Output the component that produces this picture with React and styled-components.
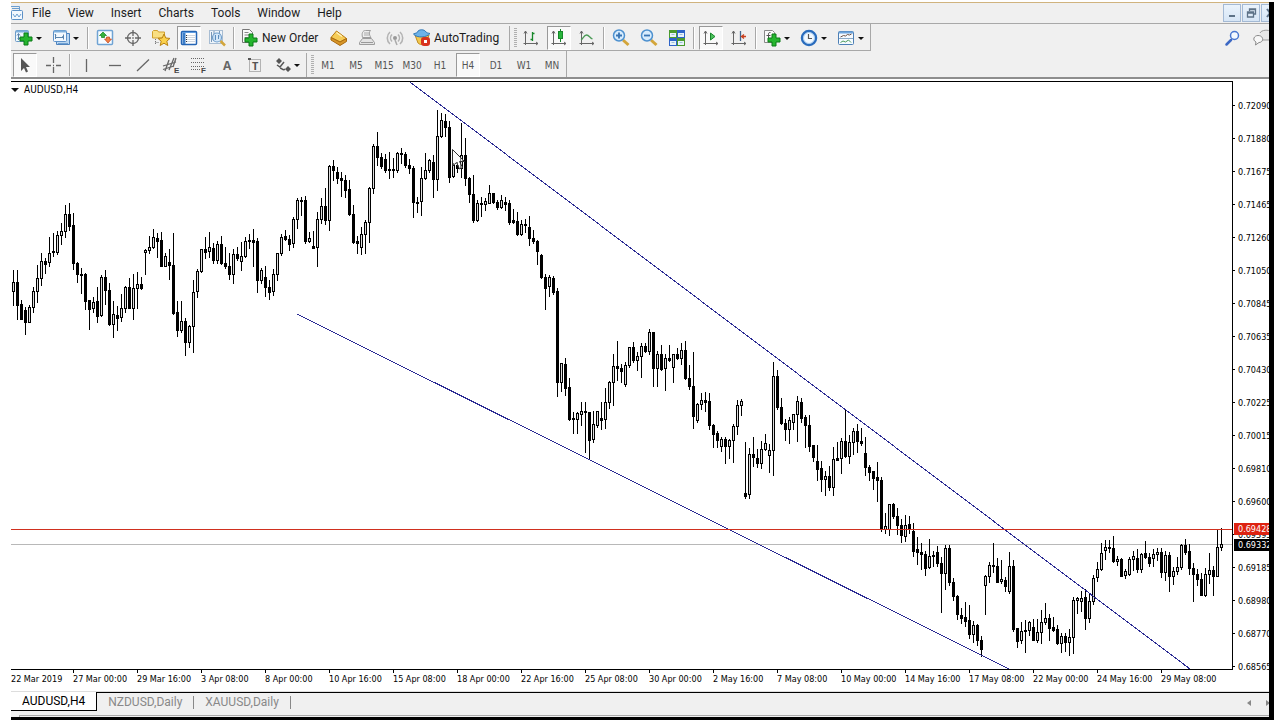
import React from 'react';
import styled, { createGlobalStyle } from 'styled-components';

const GlobalStyle = createGlobalStyle`
  body {
    margin: 0;
    background: #fff;
    font-family: Roboto, "Open Sans", sans-serif;
    font-size: 12px;
    color: #1c1c1c;
  }
  button {
    font: inherit;
    color: inherit;
    background: none;
    border: 0;
    padding: 0;
    margin: 0;
  }
`;

const Page = styled.div`
  box-sizing: border-box;
  height: 100vh;
  padding: 2px 6px 0 11px;
  display: flex;
`;

const Terminal = styled.main`
  flex: 1;
  min-width: 0;
  display: flex;
  flex-direction: column;
  overflow: hidden;
  background: #fff;
  border-right: 5px solid #000;
  border-bottom: 3px solid #000;
`;

const MenuBar = styled.header`
  box-sizing: border-box;
  height: 22px;
  display: flex;
  align-items: center;
  justify-content: space-between;
  background: #f0f0f0;
  border-top: 1px solid #d0b37e;
  border-bottom: 1px solid #a8a8a8;
`;

const Menu = styled.nav`
  display: flex;
  align-items: center;
`;

const MenuItem = styled.button`
  padding: 0 8px;
  margin-right: 1px;
  line-height: 18px;
`;

const MenuLogo = styled.svg`
  width: 13px;
  height: 16px;
`;

const WindowButtons = styled.div`
  display: flex;
  gap: 1px;
  width: 46px;
  overflow: hidden;
`;

const WindowButton = styled.button`
  box-sizing: border-box;
  flex: none;
  width: 18px;
  height: 18px;
  display: flex;
  border: 1px solid #a3b9d4;
  background: linear-gradient(#eaf3fc, #d6e5f5);
`;

const Toolbars = styled.section`
  display: flex;
  justify-content: space-between;
  background: #f0f0f0;
  border-bottom: 2px solid #8e8e8e;
`;

const ToolbarRow = styled.div`
  box-sizing: border-box;
  width: max-content;
  height: ${(p) => (p.$framed ? 27 : 26)}px;
  padding-top: 2px;
  display: flex;
  align-items: center;
  border-right: 1px solid #a8a8a8;
  border-bottom: ${(p) => (p.$framed ? '1px solid #a8a8a8' : 0)};
`;

const ToolButton = styled.button`
  box-sizing: border-box;
  width: 28px;
  height: 24px;
  display: flex;
  align-items: center;
  justify-content: center;
  color: #555;
  font: 10px "DejaVu Sans Condensed", "DejaVu Sans", sans-serif;
  ${(p) =>
    p.$pressed &&
    `
    width: 24px;
    margin: 0 2px;
    background: #f9f9f9;
    border: 1px solid #fff;
    border-top-color: #999;
    border-left-color: #999;
  `}
`;

const DropButton = styled.button`
  width: 37px;
  height: 24px;
  padding-left: 3px;
  display: flex;
  align-items: center;
  gap: 2px;
`;

const Arrow = styled.span`
  border: 3px solid transparent;
  border-top-color: #111;
  border-bottom: 0;
`;

const LabelButton = styled.button`
  width: ${(p) => p.$width}px;
  padding-left: 3px;
  display: flex;
  align-items: center;
  gap: 2px;
  white-space: nowrap;
`;

const Separator = styled.span`
  width: 2px;
  height: 22px;
  margin: 0 2px;
  background: linear-gradient(90deg, #a8a8a8 50%, #fff 50%);
`;

const GroupEnd = styled.span`
  align-self: stretch;
  width: 7px;
  margin-left: ${(p) => p.$before}px;
  border-left: 1px solid #a8a8a8;
  display: flex;
  align-items: center;
  justify-content: flex-end;
  &::after {
    content: '';
    width: 3px;
    height: 20px;
    background: repeating-linear-gradient(#b0b0b0 0 1px, #f0f0f0 1px 2px);
  }
`;

const CornerTools = styled.div`
  display: flex;
  align-items: flex-start;
  gap: 9px;
  width: 46px;
  overflow: hidden;
  padding-top: 4px;
`;

const Svg = styled.svg`
  flex: none;
  width: 20px;
  height: 20px;
  display: block;
`;

const ChartArea = styled.section`
  flex: 1;
  min-height: 0;
  padding-top: 2px;
  display: grid;
  grid-template-columns: minmax(0, 1fr) 36px;
  grid-template-rows: minmax(0, 1fr) 21px;
  color: #000;
  font: 9px/12px "DejaVu Sans Condensed", "DejaVu Sans", sans-serif;
`;

const Plot = styled.div`
  position: relative;
  border: 1px solid #000;
  border-left: 0;
  min-height: 0;
`;

const PlotSvg = styled.svg`
  display: block;
  width: 100%;
  height: 100%;
`;

const Symbol = styled.button`
  position: absolute;
  top: 2px;
  left: 0;
  display: flex;
  align-items: center;
  gap: 5px;
  font: 10px/12px "DejaVu Sans Condensed", "DejaVu Sans", sans-serif;
  ${Arrow} {
    border-width: 4px 4px 0;
  }
`;

const PriceAxis = styled.div`
  grid-row: 1 / 3;
  grid-column: 2;
  position: relative;
  overflow: hidden;
  padding: 8px 0;
  display: flex;
  flex-direction: column;
`;

const Price = styled.span`
  flex: 1;
  display: flex;
  align-items: center;
  gap: 3px;
  &::before {
    content: '';
    flex: none;
    width: 2px;
    height: 1px;
    background: #000;
  }
`;

const PriceTag = styled.span`
  position: absolute;
  top: ${(p) => p.$top}%;
  left: 1px;
  right: 0;
  padding-left: 4px;
  line-height: 12px;
  color: #fff;
  background: ${(p) => p.$color};
`;

const TimeAxis = styled.div`
  display: grid;
  grid-template-columns: 62fr repeat(17, 64fr) 72fr;
  overflow: hidden;
`;

const Time = styled.span`
  white-space: nowrap;
  text-indent: -1px;
  &::before {
    content: '';
    display: block;
    width: 1px;
    height: 3px;
    background: #000;
  }
  &:first-child {
    text-indent: -3px;
  }
  &:first-child::before {
    visibility: hidden;
  }
`;

const TabBar = styled.footer`
  box-sizing: border-box;
  height: 26px;
  display: flex;
  align-items: flex-start;
  background: #f0f0f0;
  border-top: 1px solid #ddd;
`;

const Tab = styled.button`
  height: 19px;
  padding: 0 11px;
  line-height: 19px;
  color: ${(p) => (p.$active ? '#000' : '#888')};
  ${(p) =>
    p.$active &&
    `
    background: #fff;
    border-right: 1px solid #000;
    border-bottom: 1px solid #000;
  `}
`;

const TabStrip = styled.div`
  flex: 1;
  display: flex;
  align-items: center;
  border-top: 1px solid #000;
`;

const TabDivider = styled.span`
  width: 1px;
  height: 13px;
  background: #888;
`;

const TabScroll = styled.div`
  margin-left: auto;
  width: 22px;
  display: flex;
  gap: 15px;
  overflow: hidden;
`;

const ScrollArrow = styled.button`
  flex: none;
  border: 3px solid transparent;
  border-${(p) => p.$side}: 4px solid #888;
  border-${(p) => (p.$side === 'right' ? 'left' : 'right')}: 0;
`;

const StatusEdge = styled.div`
  box-sizing: border-box;
  height: 2px;
  margin: -2px 0 0 8px;
  border-top: 1px solid #aaa;
  border-left: 1px solid #aaa;
`;

const Icon = ({ children }) => (
  <Svg viewBox="0 0 20 20" fill="none" aria-hidden="true">
    {children}
  </Svg>
);

const Plus = ({ x, y }) => (
  <path
    d={`M${x - 2} ${y - 6}h4v4h4v4h-4v4h-4v-4h-4v-4h4z`}
    fill="#25b52e"
    stroke="#0b7a16"
  />
);

const Axes = () => (
  <path d="M4.5 3v14M3 5.5L4.5 3 6 5.5M2.5 15.5H17M15 14l2 1.5-2 1.5" stroke="#666" />
);

const Lens = () => (
  <>
    <path d="M12 12l5.500 5" stroke="#d3a53a" strokeWidth="3" />
    <circle cx="8" cy="7.5" r="5.5" fill="#d7ecfd" stroke="#4e91cf" strokeWidth="1.5" />
  </>
);

const icons = {
  newChart: (
    <>
      <rect x="1.5" y="2.5" width="13" height="11" rx="1" fill="#eef6fd" stroke="#6b9bc8" />
      <path d="M2 3.5h12" stroke="#7fb0dd" strokeWidth="2" />
      <path d="M4.5 6v6M3 7.5l1.5-2 1.5 2M3.5 10.5h5" stroke="#5a84ad" />
      <Plus x={12} y={11} />
    </>
  ),
  profiles: (
    <>
      <path d="M5.5 13.5v3h13v-11h-3" fill="#b9d6f1" stroke="#4e83bd" />
      <rect x="2.5" y="2.5" width="13" height="11" rx="1" fill="#f4f9fe" stroke="#5d91c9" />
      <path d="M3 3.5h12" stroke="#7fb0dd" strokeWidth="2" />
      <path d="M4.5 6v5M4 9.5h9M12.5 6.5v5M5 8l-1-2M11 8.500l2 1" stroke="#5a84ad" />
      <path d="M7 15.5h10" stroke="#6d9fd2" />
    </>
  ),
  market: (
    <>
      <rect x="2.5" y="2.5" width="15" height="14" rx="1" fill="#f8fcff" stroke="#6fa3d4" strokeWidth="1.5" />
      <path d="M8 4l3.5 3.500h-2v2h-3v-2h-2z" fill="#36b33c" stroke="#12831c" strokeWidth=".7" />
      <path d="M11.5 9h3v2h2L13 15l-3.500-4h2z" fill="#f07f45" stroke="#c0441b" strokeWidth=".7" />
    </>
  ),
  target: (
    <>
      <circle cx="10" cy="10" r="5.5" stroke="#666" strokeWidth="1.3" />
      <path d="M10 2v6M10 12v6M2 10h6M12 10h6" stroke="#666" strokeWidth="1.3" />
      <circle cx="10" cy="10" r="1" fill="#888" />
    </>
  ),
  favorites: (
    <>
      <path d="M1.5 10V3.5l1-1h4l1 1.5h6V10z" fill="#f9df82" stroke="#d0a02f" />
      <path d="M4.5 11v6M4.5 14.5h4" stroke="#777" strokeDasharray="1 1" />
      <path d="M13 6l1.8 4 4.2.4-3.2 2.8 1 4.3-3.8-2.300-3.8 2.300 1-4.300L7 10.400l4.200-.4z" fill="#fbd14b" stroke="#b98212" />
    </>
  ),
  navigator: (
    <>
      <rect x="2.5" y="3.5" width="15" height="13" rx="1" fill="#fff" stroke="#2565b5" strokeWidth="1.5" />
      <path d="M3 4.5h14" stroke="#5c9be0" />
      <path d="M5 5v11" stroke="#3d7fca" strokeWidth="3" />
      <path d="M8 7.5h8M8 9.5h8M8 11.5h8M8 13.5h8" stroke="#c3cdd8" strokeWidth=".8" />
      <path d="M7.5 7v8" stroke="#333" strokeDasharray="1 1" />
    </>
  ),
  tester: (
    <>
      <rect x="2.5" y="2.5" width="13" height="13" fill="#eef4fa" stroke="#a8bdd3" />
      <path d="M4.5 4v10M7 3v10M12.5 3v6" stroke="#7898b8" />
      <circle cx="10" cy="9.5" r="4.5" fill="#cde5fa" fillOpacity=".8" stroke="#6f9ecb" strokeWidth="1.2" />
      <path d="M8.5 7v5M11.5 7v4" stroke="#5d8dbd" />
      <path d="M13.5 13l4.500 4.500" stroke="#d2a53c" strokeWidth="2.5" />
    </>
  ),
  order: (
    <>
      <path d="M2.5 1.5h7l3 3v10h-10z" fill="#fafafa" stroke="#777" />
      <path d="M4.5 4.5h4M4.5 7h6M4.5 9.5h4M4.5 12h3" stroke="#888" />
      <Plus x={11} y={12} />
    </>
  ),
  editor: (
    <>
      <path d="M7.5 3l10 7.5-6.500 3.500L2 9.500z" fill="#f6cc57" stroke="#b97b11" />
      <path d="M2 9.5l9 4.500 6.500-3.500v3L11 17.500 2 12z" fill="#d89628" stroke="#a9690d" />
      <path d="M7.5 4.5L13 8.500" stroke="#fff3bd" strokeWidth="1.5" />
    </>
  ),
  vps: (
    <>
      <path d="M5.5 9.5c-1-4 0-7 3-7h5c-2 2-1 5 .5 7z" fill="#eee" stroke="#9c9c9c" />
      <path d="M7 5h5M7 7h5" stroke="#aaa" />
      <path d="M2.5 14.5l3-4h9l3 4v2h-15z" fill="#e3e3e3" stroke="#9c9c9c" />
      <path d="M4 14.5h12" stroke="#999" />
    </>
  ),
  signals: (
    <>
      <circle cx="10" cy="10" r="2" fill="#999" />
      <path d="M7 6.5a5 5 0 0 0 0 7M13 6.5a5 5 0 0 1 0 7M5 4a8 8 0 0 0 0 12M15 4a8 8 0 0 1 0 12" stroke="#b4b4b4" strokeWidth="1.6" />
      <path d="M10 12l2 5" stroke="#aaa" strokeWidth="1.5" />
    </>
  ),
  auto: (
    <>
      <path d="M3 7l3 8c2 2 5 2 8 0l3-8z" fill="#f2c84f" stroke="#bf8b1f" />
      <path d="M1.5 6c2-1 4-1 4-2 1-3 7-3 8.5 0 1 1 2 1 4 1.5-3 4-13 5-16.5.5z" fill="#6db2e8" stroke="#2f78b7" />
      <rect x="9" y="9" width="9" height="9" rx="3" fill="#d8321d" />
      <rect x="12" y="12" width="3" height="3" fill="#fff" />
    </>
  ),
  bars: (
    <>
      <Axes />
      <path d="M11.5 4v9M9.500 11.5h2M11.5 5.5h2" stroke="#17872a" strokeWidth="1.3" />
    </>
  ),
  candles: (
    <>
      <Axes />
      <path d="M11.5 1v13" stroke="#17872a" />
      <rect x="9.5" y="3.5" width="4" height="7" fill="#27b63b" stroke="#17872a" />
    </>
  ),
  line: (
    <>
      <Axes />
      <path d="M4 12c2-1 3-5 5.5-5S13 10 15.5 11" stroke="#4a9a55" strokeWidth="1.3" />
    </>
  ),
  zoomIn: (
    <>
      <Lens />
      <path d="M8 4.5v6M5 7.5h6" stroke="#3975b4" strokeWidth="1.8" />
    </>
  ),
  zoomOut: (
    <>
      <Lens />
      <path d="M5 7.5h6" stroke="#3975b4" strokeWidth="1.8" />
    </>
  ),
  tile: (
    <>
      <path d="M2 2h8v8H2zM10 10h8v8h-8z" fill="#4b9b2e" />
      <path d="M10 2h8v8h-8zM2 10h8v8H2z" fill="#2e64c8" />
      <path d="M3 5h6v4H3zM11 5h6v4h-6zM3 13h6v4H3zM11 13h6v4h-6z" fill="#e8f3fb" />
      <path d="M4.5 6.5h3M12.5 6.5h3M4.5 14.5h3M12.5 14.5h3" stroke="#9ebfd6" />
    </>
  ),
  scroll: (
    <>
      <Axes />
      <path d="M9.5 5l4.500 3.500L9.500 12z" fill="#4cc25c" stroke="#17872a" />
    </>
  ),
  shift: (
    <>
      <Axes />
      <path d="M11.5 3v10" stroke="#44658c" strokeWidth="1.3" />
      <path d="M17 8.5h-4M15 6.5l-2.500 2 2.500 2" stroke="#c9401f" strokeWidth="1.3" />
    </>
  ),
  indicators: (
    <>
      <path d="M2.5 2.5h8l2 2v10h-10z" fill="#fafafa" stroke="#888" />
      <path d="M8.5 4.5c-2-.5-2 1-2 3v5M4.5 7.5h4" stroke="#555" />
      <Plus x={12} y={12} />
    </>
  ),
  clock: (
    <>
      <circle cx="10" cy="10" r="7" fill="#f3f9ff" stroke="#2a6cbd" strokeWidth="2.5" />
      <circle cx="10" cy="10" r="5.5" stroke="#a9cdf0" />
      <path d="M9.5 6v4.500H13" stroke="#555" strokeWidth="1.2" />
    </>
  ),
  template: (
    <>
      <rect x="2.5" y="3.5" width="15" height="13" rx="1" fill="#f5faff" stroke="#4c7fb5" />
      <path d="M3 4.5h14" stroke="#6ca5dd" strokeWidth="2" />
      <path d="M3 10.5h14" stroke="#8aa9c6" />
      <path d="M4.5 9l3-1.500 2 .5 2-1.500 2 .5 2-1" stroke="#6b5145" />
      <path d="M4.5 14.5l2.500-1.500 2.500 1 3-2 2.500 2.500" stroke="#4b9b5a" />
    </>
  ),
  cursor: <path d="M6 3v13l3-3 2 4.500 2-1-2-4.500h4z" fill="#555" />,
  cross: <path d="M10.5 2v6M10.5 12v6M3 10.5h5M13 10.5h5M10 10.5h1" stroke="#666" strokeWidth="1.3" />,
  vline: <path d="M9.5 4v13" stroke="#666" strokeWidth="1.3" />,
  hline: <path d="M4 10.5h12" stroke="#666" strokeWidth="1.3" />,
  trend: <path d="M4 16L16 4.5" stroke="#666" strokeWidth="1.3" />,
  channel: (
    <>
      <path d="M2 11l13-4M2 14.5L13 11M4 16L8 5M8 15l5-12M12 12l3-9" stroke="#666" strokeWidth="1.3" />
      <text x="13" y="18" fontSize="8" fontWeight="700" fill="#444" fontFamily="Liberation Sans">E</text>
    </>
  ),
  fibo: (
    <>
      <path d="M2 3.5h14M2 7.5h14M2 11.5h14M2 14.5h9" stroke="#666" strokeDasharray="1 1" />
      <text x="12" y="18" fontSize="8" fontWeight="700" fill="#444" fontFamily="Liberation Sans">F</text>
    </>
  ),
  text: <text x="6" y="15" fontSize="12" fontWeight="700" fill="#666" fontFamily="Open Sans">A</text>,
  label: (
    <>
      <rect x="4.5" y="4.5" width="11" height="12" stroke="#777" strokeDasharray="1 1" />
      <path d="M3 3h3v2H3z" fill="#555" />
      <text x="7" y="15" fontSize="11" fontWeight="700" fill="#555" fontFamily="Open Sans">T</text>
    </>
  ),
  shapes: (
    <>
      <path d="M7 3l3 3-3 3-3-3zM16 11l3 3-3 3-3-3z" fill="#555" />
      <path d="M5 10l3 2 4-5" stroke="#555" strokeWidth="1.5" />
      <path d="M8 13.5c2-1 3 3 5 .5" stroke="#555" strokeWidth="1.5" />
    </>
  ),
  search: (
    <>
      <path d="M8 12l-4.500 4.500" stroke="#3c68c4" strokeWidth="2.5" strokeLinecap="round" />
      <circle cx="11.500" cy="7.5" r="4" fill="#f4f9ff" stroke="#4a77d0" strokeWidth="1.5" />
    </>
  ),
  chat: (
    <>
      <path d="M8 5c1-3 9-4 11-1v8H9" fill="#e8e8e8" stroke="#999" />
      <path d="M6 7.5c6 0 6 7 1 7L3.500 17l.5-3C0 12 2 7.500 6 7.500z" fill="#f8f8f8" stroke="#888" />
    </>
  ),
};

const Tool = ({ icon, label, pressed }) => (
  <ToolButton type="button" aria-label={label} aria-pressed={pressed} $pressed={pressed}>
    <Icon>{icons[icon]}</Icon>
  </ToolButton>
);

const DropTool = ({ icon, label }) => (
  <DropButton type="button" aria-label={label}>
    <Icon>{icons[icon]}</Icon>
    <Arrow />
  </DropButton>
);

const MENUS = ['File', 'View', 'Insert', 'Charts', 'Tools', 'Window', 'Help'];
const PERIODS = ['M1', 'M5', 'M15', 'M30', 'H1', 'H4', 'D1', 'W1', 'MN'];

const PRICES = [
  '0.72090', '0.71880', '0.71675', '0.71465', '0.71260', '0.71050',
  '0.70845', '0.70635', '0.70430', '0.70225', '0.70015', '0.69810',
  '0.69600', '0.69395', '0.69185', '0.68980', '0.68770', '0.68565',
];

const TIMES = [
  '22 Mar 2019', '27 Mar 00:00', '29 Mar 16:00', '3 Apr 08:00', '8 Apr 00:00',
  '10 Apr 16:00', '15 Apr 08:00', '18 Apr 00:00', '22 Apr 16:00', '25 Apr 08:00',
  '30 Apr 00:00', '2 May 16:00', '7 May 08:00', '10 May 00:00', '14 May 16:00',
  '17 May 08:00', '22 May 00:00', '24 May 16:00', '29 May 08:00',
];

// high, open, close, low in chart units, y grows downwards
const CANDLES = [
  [270,291,282,305],[270,282,305,319],[300,304,319,319],[307,310,322,334],[305,322,307,322],
  [287,307,291,312],[265,291,278,302],[253,278,261,285],[258,261,264,273],[237,262,253,266],
  [233,251,252,256],[231,252,235,254],[223,235,231,244],[205,231,214,237],[203,214,226,230],
  [213,225,263,269],[262,263,274,282],[268,274,275,293],[273,274,301,309],[300,300,309,329],
  [297,308,302,312],[287,301,316,322],[275,315,277,316],[270,277,290,304],[283,290,324,325],
  [301,324,314,337],[306,315,318,330],[294,317,308,321],[286,308,287,312],[278,287,308,308],
  [274,308,288,319],[272,288,284,308],[277,284,288,289],[249,252,250,274],[236,250,247,253],
  [229,247,237,248],[233,238,241,257],[232,240,266,266],[253,266,256,266],[249,262,265,279],
  [233,265,313,314],[301,312,330,336],[301,330,321,332],[318,321,342,355],[325,342,326,347],
  [280,326,292,352],[269,291,271,297],[249,271,249,272],[237,249,252,258],[232,251,247,257],
  [243,248,260,263],[241,260,244,263],[236,244,263,264],[247,263,266,268],[253,266,274,279],
  [249,274,254,283],[247,254,258,260],[242,261,256,270],[237,256,241,257],[234,240,241,248],
  [229,240,242,266],[238,241,280,292],[268,280,270,283],[266,277,287,296],[280,287,292,299],
  [269,291,274,295],[253,274,253,280],[234,253,237,255],[230,236,239,240],[235,239,244,250],
  [217,243,219,247],[198,219,200,228],[197,200,201,215],[196,200,241,243],[232,241,238,242],
  [231,246,248,248],[212,247,219,266],[198,219,206,223],[188,206,220,224],[165,220,166,230],
  [160,166,170,180],[167,172,178,183],[172,178,180,196],[175,180,190,197],[180,189,214,215],
  [205,214,242,243],[236,241,243,253],[227,247,234,254],[220,234,222,253],[187,222,188,242],
  [144,188,146,193],[132,146,157,165],[153,157,166,168],[154,159,170,172],[152,169,170,178],
  [158,169,170,177],[152,170,153,172],[148,153,154,163],[152,154,165,167],[159,165,168,173],
  [166,168,202,217],[197,202,203,212],[167,201,178,215],[153,178,170,179],[159,170,160,172],
  [155,162,179,197],[110,179,136,190],[113,136,120,137],[114,121,127,136],[121,127,177,182],
  [163,176,165,177],[162,165,168,172],[123,168,155,177],[138,155,178,185],[177,178,194,202],
  [175,194,220,222],[200,220,203,221],[197,203,204,216],[198,204,201,210],[185,203,193,203],
  [193,193,202,203],[200,202,207,209],[195,207,200,208],[197,202,204,210],[200,203,222,224],
  [209,220,222,223],[212,221,234,235],[220,234,224,235],[219,224,225,232],[216,227,238,245],
  [230,238,241,243],[240,241,251,264],[254,255,277,278],[274,277,288,309],[275,286,277,296],
  [276,278,292,294],[288,291,382,396],[363,382,363,391],[358,364,388,395],[378,387,419,420],
  [412,418,419,433],[412,419,413,433],[402,414,411,425],[402,411,412,452],[412,412,440,458],
  [411,439,424,442],[411,425,411,427],[402,418,420,429],[388,419,402,428],[381,402,382,408],
  [354,382,366,405],[341,366,368,380],[364,368,371,382],[362,384,365,386],[347,365,347,367],
  [342,347,360,362],[352,360,356,370],[343,356,346,377],[343,346,351,352],[329,351,332,354],
  [332,332,368,386],[351,368,354,386],[345,354,369,370],[354,368,358,390],[345,358,360,361],
  [354,367,354,382],[348,354,358,359],[343,358,350,364],[341,350,378,379],[365,378,386,389],
  [352,386,416,428],[403,420,404,422],[393,404,400,409],[392,400,402,411],[393,401,425,429],
  [424,425,434,447],[431,433,440,447],[437,446,439,451],[437,439,446,463],[439,446,440,458],
  [424,440,426,462],[400,426,405,434],[399,405,401,415],[442,493,496,498],[448,494,454,498],
  [437,454,457,466],[449,458,463,467],[441,463,449,468],[434,449,443,450],[444,455,450,472],
  [362,450,376,475],[370,376,407,409],[398,407,423,424],[419,423,429,440],[417,429,420,443],
  [414,422,414,429],[396,414,401,441],[398,402,418,422],[415,417,425,447],[415,425,446,451],
  [445,445,457,461],[445,461,469,480],[461,468,479,491],[471,479,476,495],[466,476,487,490],
  [447,487,459,495],[442,458,460,460],[438,458,441,473],[409,441,456,457],[435,456,442,463],
  [428,442,431,454],[424,431,441,452],[428,441,443,445],[437,453,467,475],[465,467,472,480],
  [471,471,478,489],[462,477,480,501],[477,480,529,531],[513,529,526,533],[504,529,504,535],
  [503,504,516,518],[508,516,525,534],[519,525,535,542],[515,536,525,541],[516,524,528,533],
  [523,531,551,556],[537,549,552,564],[543,552,554,569],[551,554,568,575],[539,567,556,568],
  [551,555,556,566],[546,552,563,566],[557,563,573,612],[545,573,548,589],[545,548,582,585],
  [578,582,596,600],[595,596,614,619],[608,615,618,623],[602,617,621,626],[605,620,634,638],
  [621,634,625,642],[624,625,640,645],[636,640,649,656],[575,585,576,614],[562,576,565,582],
  [543,565,566,572],[558,566,582,582],[560,581,579,583],[577,580,586,591],[552,591,566,593],
  [560,566,629,631],[628,628,641,647],[622,640,631,643],[620,630,631,652],[621,630,622,635],
  [619,627,640,640],[619,640,632,642],[610,632,622,643],[603,622,618,624],[614,618,628,640],
  [617,627,630,631],[625,629,643,644],[633,643,636,652],[633,636,642,651],[629,642,637,655],
  [597,637,600,653],[597,600,598,613],[591,601,598,611],[589,597,618,629],[593,618,601,622],
  [575,601,578,604],[562,577,569,581],[543,569,553,570],[540,550,547,559],[540,547,548,552],
  [536,548,561,562],[556,561,559,565],[558,559,576,576],[569,575,571,578],[557,574,559,575],
  [551,559,556,570],[549,558,569,572],[553,569,554,572],[541,553,557,558],[553,557,563,566],
  [549,558,554,566],[548,554,552,560],[548,552,572,577],[551,572,555,580],[552,555,576,591],
  [567,576,571,584],[557,571,567,574],[544,567,545,569],[539,545,552,554],[544,551,568,574],
  [563,568,574,601],[569,574,579,585],[573,579,595,595],[568,595,574,596],[553,574,570,583],
  [566,570,576,595],[530,576,547,576],[528,547,544,550],
];

function Candle({ x, data: [high, open, close, low] }) {
  const top = Math.min(open, close);
  return (
    <g stroke="#000">
      <path d={`M${x + 0.5} ${high}V${low + 1}`} />
      <rect
        x={x - 0.5}
        y={top + 0.5}
        width="2"
        height={Math.abs(close - open)}
        fill={close < open ? '#ddd' : '#000'}
      />
    </g>
  );
}

function PriceChart() {
  return (
    <PlotSvg viewBox="11 82 1221 587" preserveAspectRatio="none" role="img" aria-label="AUDUSD H4 candles">
      <rect x="11" y="544" width="1221" height="1" fill="#b8b8b8" />
      <g shapeRendering="crispEdges">
        {CANDLES.map((data, i) => (
          <Candle key={i} x={13 + i * 4} data={data} />
        ))}
      </g>
      <g stroke="#2c2c94" shapeRendering="crispEdges">
        <path d="M410 82L1190 669" />
        <path d="M297 314L1009 669" />
      </g>
      <rect x="11" y="529" width="1221" height="1" fill="#d0301f" />
      <path d="M452.5 149.5V166l4-3.500 3 6.500 3-1.500-3-6h5z" fill="#fff" fillOpacity=".5" stroke="#333" />
    </PlotSvg>
  );
}

export default function App() {
  return (
    <Page>
      <GlobalStyle />
      <Terminal>
        <MenuBar>
          <Menu>
            <MenuLogo viewBox="0 0 13 16" fill="none" aria-hidden="true">
              <path d="M0 1.5h8.500V5M1 3.5h7" stroke="#6c9fd0" />
              <rect x=".5" y="5.5" width="11" height="9" rx="1" fill="#f2f8fe" stroke="#5b90c6" />
              <path d="M2 9l2 3 2-3 2 3 2-3" stroke="#6c9fd0" />
            </MenuLogo>
            {MENUS.map((name) => (
              <MenuItem key={name} type="button">{name}</MenuItem>
            ))}
          </Menu>
          <WindowButtons>
            <WindowButton type="button" aria-label="Minimize">
              <svg viewBox="0 0 16 16"><path d="M5 10h6v2H5z" fill="#5d7287" /></svg>
            </WindowButton>
            <WindowButton type="button" aria-label="Restore">
              <svg viewBox="0 0 16 16" fill="none" stroke="#5d7287" strokeWidth="1.3">
                <path d="M6.5 6V4h6v5h-2M6 4.5h7" />
                <path d="M4.5 7h6v5h-6zM4 8h7" />
              </svg>
            </WindowButton>
            <WindowButton type="button" aria-label="Close">
              <svg viewBox="0 0 16 16"><path d="M5 4l6 8M11 4l-6 8" stroke="#5d7287" strokeWidth="2" /></svg>
            </WindowButton>
          </WindowButtons>
        </MenuBar>

        <Toolbars>
          <div>
            <ToolbarRow $framed>
              <DropTool icon="newChart" label="New chart" />
              <DropTool icon="profiles" label="Profiles" />
              <Separator />
              <Tool icon="market" label="Market Watch" />
              <Tool icon="target" label="Data Window" />
              <Tool icon="favorites" label="Navigator" />
              <Tool icon="navigator" label="Terminal" pressed />
              <Tool icon="tester" label="Strategy Tester" />
              <Separator />
              <LabelButton type="button" $width={88}>
                <Icon>{icons.order}</Icon>
                New Order
              </LabelButton>
              <Tool icon="editor" label="MetaEditor" />
              <Tool icon="vps" label="Virtual hosting" />
              <Tool icon="signals" label="Signals" />
              <LabelButton type="button" $width={96}>
                <Icon>{icons.auto}</Icon>
                AutoTrading
              </LabelButton>
              <GroupEnd $before={4} />
              <Tool icon="bars" label="Bar chart" />
              <Tool icon="candles" label="Candlesticks" pressed />
              <Tool icon="line" label="Line chart" />
              <Separator />
              <Tool icon="zoomIn" label="Zoom in" />
              <Tool icon="zoomOut" label="Zoom out" />
              <Tool icon="tile" label="Tile windows" />
              <Separator />
              <Tool icon="scroll" label="Auto scroll" pressed />
              <Tool icon="shift" label="Chart shift" />
              <Separator />
              <DropTool icon="indicators" label="Indicators" />
              <DropTool icon="clock" label="Periods" />
              <DropTool icon="template" label="Templates" />
            </ToolbarRow>
            <ToolbarRow>
              <Tool icon="cursor" label="Cursor" pressed />
              <Tool icon="cross" label="Crosshair" />
              <Separator />
              <Tool icon="vline" label="Vertical line" />
              <Tool icon="hline" label="Horizontal line" />
              <Tool icon="trend" label="Trendline" />
              <Tool icon="channel" label="Equidistant channel" />
              <Tool icon="fibo" label="Fibonacci retracement" />
              <Tool icon="text" label="Text" />
              <Tool icon="label" label="Text label" />
              <DropTool icon="shapes" label="Arrows" />
              <GroupEnd $before={0} />
              {PERIODS.map((period) => (
                <ToolButton key={period} type="button" $pressed={period === 'H4'}>
                  {period}
                </ToolButton>
              ))}
            </ToolbarRow>
          </div>
          <CornerTools>
            <button type="button" aria-label="Search"><Icon>{icons.search}</Icon></button>
            <button type="button" aria-label="Chat"><Icon>{icons.chat}</Icon></button>
          </CornerTools>
        </Toolbars>

        <ChartArea>
          <Plot>
            <PriceChart />
            <Symbol type="button">
              <Arrow />
              AUDUSD,H4
            </Symbol>
          </Plot>
          <PriceAxis>
            {PRICES.map((price) => (
              <Price key={price}>{price}</Price>
            ))}
            <PriceTag $top={72.5} $color="#dd2211">0.69428</PriceTag>
            <PriceTag $top={75} $color="#000">0.69332</PriceTag>
          </PriceAxis>
          <TimeAxis>
            {TIMES.map((time) => (
              <Time key={time}>{time}</Time>
            ))}
          </TimeAxis>
        </ChartArea>

        <TabBar>
          <Tab type="button" $active>AUDUSD,H4</Tab>
          <TabStrip>
            <Tab type="button">NZDUSD,Daily</Tab>
            <TabDivider />
            <Tab type="button">XAUUSD,Daily</Tab>
            <TabDivider />
            <TabScroll>
              <ScrollArrow type="button" aria-label="Scroll tabs left" $side="right" />
              <ScrollArrow type="button" aria-label="Scroll tabs right" $side="left" />
            </TabScroll>
          </TabStrip>
        </TabBar>
        <StatusEdge />
      </Terminal>
    </Page>
  );
}
